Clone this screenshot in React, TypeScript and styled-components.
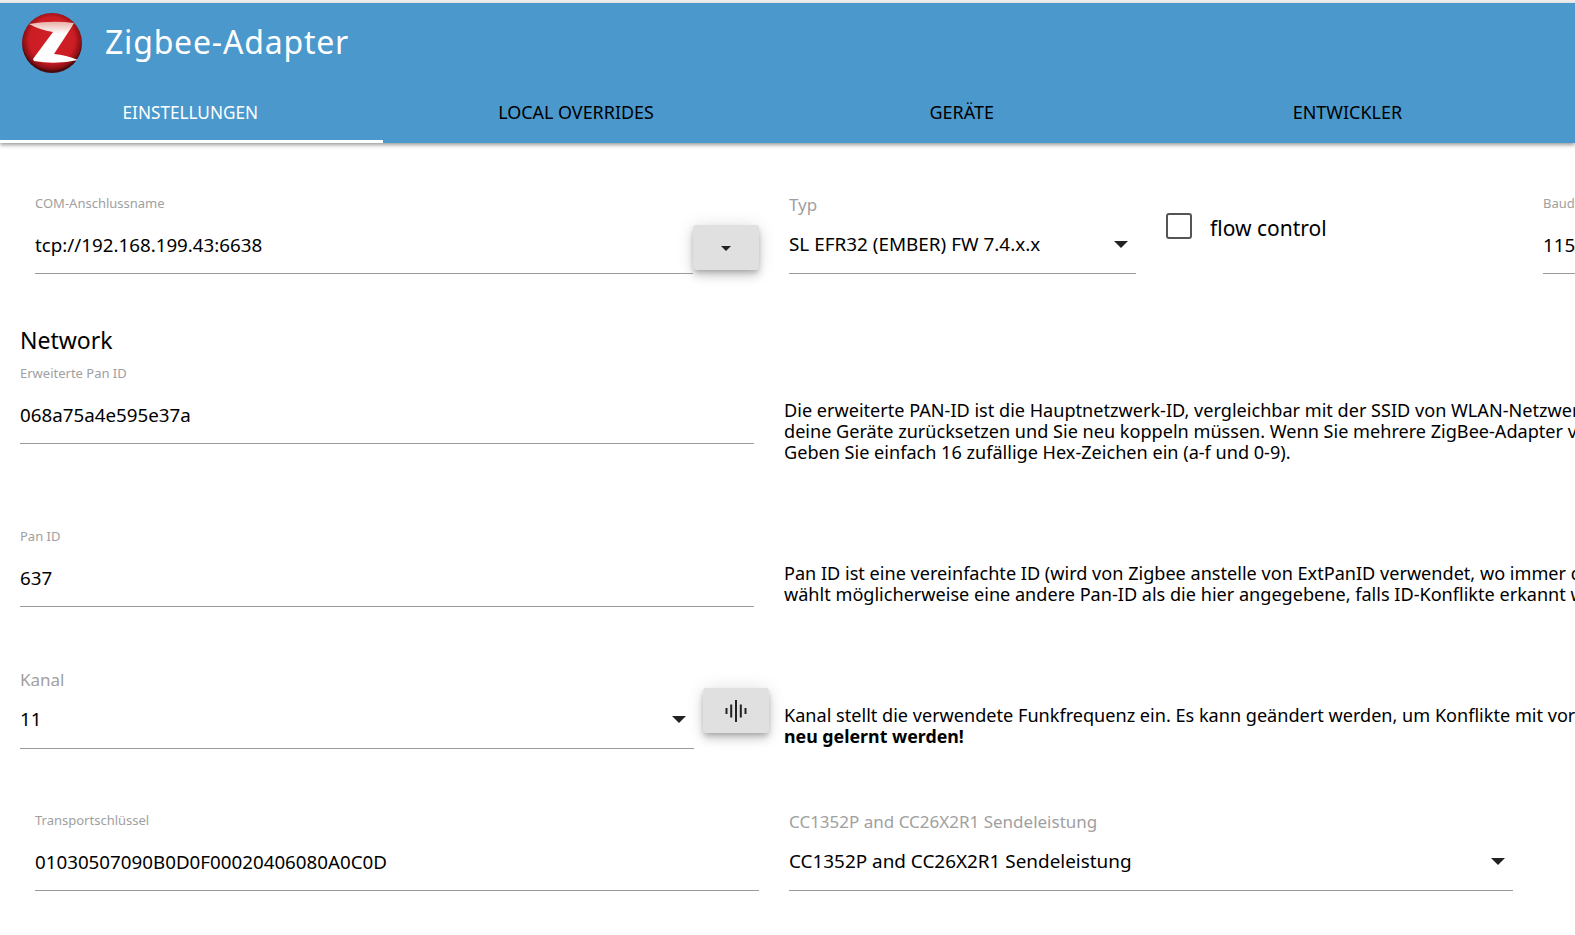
import React from "react";
import styled, { createGlobalStyle } from "styled-components";

const Global = createGlobalStyle`
  html, body { margin: 0; padding: 0; background: #fff; overflow: hidden; }
  body { font-family: "Noto Sans", "Open Sans", sans-serif; color: #000; }
  #root { width: 1575px; height: 935px; overflow: hidden; }
`;

const Page = styled.div`
  width: 1575px;
  height: 935px;
  overflow: hidden;
  padding-top: 3px;
  box-sizing: border-box;
  background: linear-gradient(#eee 0 3px, #fff 3px);
`;

const Header = styled.header`
  height: 140px;
  background: #4b98cc;
  box-shadow: 0 2px 4px rgba(0, 0, 0, 0.4);
  display: flex;
  flex-direction: column;
`;

const TitleBar = styled.div`
  height: 92px;
  display: flex;
  align-items: center;
  padding: 0 0 14px 22px;
  box-sizing: border-box;
  gap: 23px;
`;

const LogoMark = styled.svg`
  flex: none;
  margin-top: 2px;
`;

const Title = styled.h1`
  margin: 0;
  font-size: 32px;
  font-weight: 400;
  color: #fff;
  letter-spacing: 0.8px;
  line-height: 40px;
`;

const Tabs = styled.nav`
  flex: 1;
  display: grid;
  grid-template-columns: repeat(4, 385.7px);
`;

const Tab = styled.div<{ $active?: boolean }>`
  display: flex;
  align-items: center;
  justify-content: center;
  font-size: ${(p) => (p.$active ? "17.2px" : "17.95px")};
  padding: 0 ${(p) => (p.$active ? "2.4px" : "5px")} ${(p) => (p.$active ? "10px" : "12px")} 0;
  box-sizing: border-box;
  text-transform: uppercase;
  color: ${(p) => (p.$active ? "#fff" : "#000")};
  border-bottom: 3px solid ${(p) => (p.$active ? "#fff" : "transparent")};
  margin-right: ${(p) => (p.$active ? "2.7px" : "0")};
`;

const Row = styled.section<{ $h: number; $left?: number }>`
  height: ${(p) => p.$h}px;
  padding-left: ${(p) => p.$left ?? 20}px;
  display: flex;
  align-items: flex-end;
  box-sizing: border-box;
  white-space: nowrap;
`;

const Field = styled.div<{ $w: number; $gap?: number; $select?: boolean }>`
  position: relative;
  flex: none;
  width: ${(p) => p.$w}px;
  height: ${(p) => (p.$select ? "78px" : "79px")};
  margin-left: ${(p) => p.$gap ?? 0}px;
  padding-top: ${(p) => (p.$select ? "1px" : "0")};
  border-bottom: 1px solid #9a9a9a;
  box-sizing: border-box;
`;

const Label = styled.label<{ $large?: boolean }>`
  display: block;
  color: #a0a0a0;
  font-size: ${(p) => (p.$large ? "17px" : "13px")};
  line-height: 16px;
  height: 16px;
`;

const Value = styled.div<{ $select?: boolean }>`
  font-size: ${(p) => (p.$select ? "18.9px" : "18.75px")};
  line-height: 26px;
  margin-top: ${(p) => (p.$select ? "18px" : "21px")};
`;

const Caret = styled.span`
  position: absolute;
  right: 8px;
  bottom: 25px;
  width: 0;
  height: 0;
  border-left: 7px solid transparent;
  border-right: 7px solid transparent;
  border-top: 7px solid #222;
`;

const ActionButton = styled.button<{ $gap?: number; $lift: number }>`
  flex: none;
  width: 66px;
  height: 45px;
  padding: 0;
  margin-left: ${(p) => p.$gap ?? 0}px;
  margin-bottom: ${(p) => p.$lift}px;
  border: 0;
  border-radius: 3px;
  background: #e0e0e0;
  box-shadow: 0 3px 5px -1px rgba(0, 0, 0, 0.2), 0 6px 10px 0 rgba(0, 0, 0, 0.14), 0 1px 18px 0 rgba(0, 0, 0, 0.12);
  display: flex;
  align-items: center;
  justify-content: center;
`;

const SmallCaret = styled.span`
  width: 0;
  height: 0;
  margin-top: 2px;
  border-left: 5px solid transparent;
  border-right: 5px solid transparent;
  border-top: 5px solid #222;
`;

const Check = styled.span`
  width: 22px;
  height: 22px;
  border: 2px solid #555;
  border-radius: 3px;
  flex: none;
`;

const CheckWrap = styled.div`
  flex: none;
  width: 377px;
  height: 61px;
  margin: 70px 0 0 30px;
  display: flex;
  gap: 18px;
  align-self: flex-start;
  align-items: flex-start;
`;

const CheckText = styled.span`
  font-size: 21px;
  line-height: 28px;
  margin-top: 1px;
`;

const Heading = styled.h2`
  margin: 50px 0 0;
  padding-left: 20px;
  font-size: 23px;
  line-height: 32px;
  font-weight: 400;
`;

const Help = styled.p<{ $top: number; $gap?: number }>`
  margin: ${(p) => p.$top}px 0 0 ${(p) => p.$gap ?? 30}px;
  font-size: 18.1px;
  line-height: 21px;
  white-space: nowrap;
  align-self: flex-start;
`;

const HelpStrong = styled.strong`
  font-size: 17.8px;
  font-weight: 700;
`;

function WaveIcon() {
  return (
    <svg width="24" height="24" viewBox="0 0 24 24" fill="#222">
      <rect x="1.5" y="9" width="2" height="6" />
      <rect x="6.2" y="5.5" width="2" height="13" />
      <rect x="11" y="1" width="2" height="22" />
      <rect x="15.8" y="5.5" width="2" height="13" />
      <rect x="20.5" y="9" width="2" height="6" />
    </svg>
  );
}

function ZigbeeLogo() {
  return (
    <LogoMark width="60" height="60" viewBox="0 0 60 60">
      <defs>
        <radialGradient id="ball" cx="50%" cy="45%" r="52%">
          <stop offset="0%" stopColor="#cf1f27" />
          <stop offset="72%" stopColor="#cc1d25" />
          <stop offset="92%" stopColor="#8e1014" />
          <stop offset="100%" stopColor="#4a0a0c" />
        </radialGradient>
        <linearGradient id="top" x1="0" y1="0" x2="0" y2="1">
          <stop offset="0%" stopColor="#e8b0a8" />
          <stop offset="30%" stopColor="#fff" />
        </linearGradient>
      </defs>
      <circle cx="30" cy="30" r="30" fill="url(#ball)" />
      <path d="M7 11 Q30 7 52 10 L49 15 L32 41 Q44 42 56 47 Q34 52 12 48 L11 46 L31 19 Q18 17 7 11 Z" fill="url(#top)" />
    </LogoMark>
  );
}

export default function App() {
  return (
    <Page>
      <Global />
      <Header>
        <TitleBar>
          <ZigbeeLogo />
          <Title>Zigbee-Adapter</Title>
        </TitleBar>
        <Tabs>
          <Tab $active>Einstellungen</Tab>
          <Tab>Local Overrides</Tab>
          <Tab>Geräte</Tab>
          <Tab>Entwickler</Tab>
        </Tabs>
      </Header>

      <Row $h={131} $left={35}>
        <Field $w={658}>
          <Label>COM-Anschlussname</Label>
          <Value>tcp://192.168.199.43:6638</Value>
        </Field>
        <ActionButton $lift={4}><SmallCaret /></ActionButton>
        <Field $w={347} $gap={30} $select>
          <Label $large>Typ</Label>
          <Value $select>SL EFR32 (EMBER) FW 7.4.x.x</Value>
          <Caret />
        </Field>
        <CheckWrap>
          <Check />
          <CheckText>flow control</CheckText>
        </CheckWrap>
        <Field $w={200}>
          <Label>Baudrate</Label>
          <Value>115200</Value>
        </Field>
      </Row>

      <Heading>Network</Heading>

      <Row $h={88}>
        <Field $w={734}>
          <Label>Erweiterte Pan ID</Label>
          <Value>068a75a4e595e37a</Value>
        </Field>
        <Help $top={44}>
          Die erweiterte PAN-ID ist die Hauptnetzwerk-ID, vergleichbar mit der SSID von WLAN-Netzwerken.<br />
          deine Geräte zurücksetzen und Sie neu koppeln müssen. Wenn Sie mehrere ZigBee-Adapter verwenden<br />
          Geben Sie einfach 16 zufällige Hex-Zeichen ein (a-f und 0-9).
        </Help>
      </Row>

      <Row $h={163}>
        <Field $w={734}>
          <Label>Pan ID</Label>
          <Value>637</Value>
        </Field>
        <Help $top={119}>
          Pan ID ist eine vereinfachte ID (wird von Zigbee anstelle von ExtPanID verwendet, wo immer das möglich ist).<br />
          wählt möglicherweise eine andere Pan-ID als die hier angegebene, falls ID-Konflikte erkannt werden.
        </Help>
      </Row>

      <Row $h={142}>
        <Field $w={674} $select>
          <Label $large>Kanal</Label>
          <Value $select>11</Value>
          <Caret />
        </Field>
        <ActionButton $gap={9} $lift={16}><WaveIcon /></ActionButton>
        <Help $top={98} $gap={15}>
          Kanal stellt die verwendete Funkfrequenz ein. Es kann geändert werden, um Konflikte mit vorhandenen Netzwerken zu vermeiden.<br />
          <HelpStrong>neu gelernt werden!</HelpStrong>
        </Help>
      </Row>

      <Row $h={142} $left={35}>
        <Field $w={724}>
          <Label>Transportschlüssel</Label>
          <Value>01030507090B0D0F00020406080A0C0D</Value>
        </Field>
        <Field $w={724} $gap={30} $select>
          <Label $large>CC1352P and CC26X2R1 Sendeleistung</Label>
          <Value $select>CC1352P and CC26X2R1 Sendeleistung</Value>
          <Caret />
        </Field>
      </Row>
    </Page>
  );
}
